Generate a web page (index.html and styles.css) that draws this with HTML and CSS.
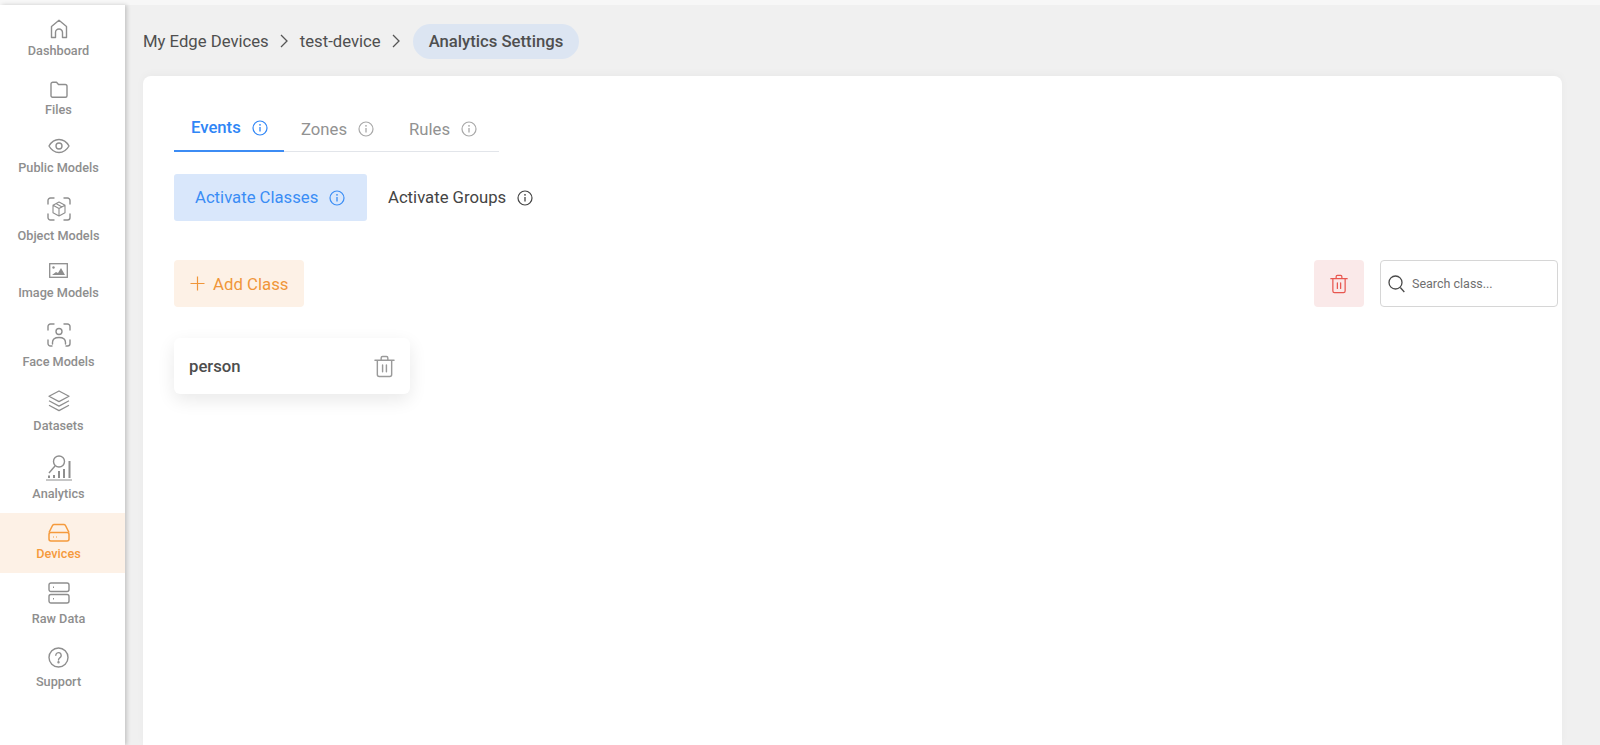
FILE: index.html
```html
<!DOCTYPE html>
<html lang="en">
<head>
  <meta charset="UTF-8" />
  <title>Analytics Settings</title>
  <link rel="stylesheet" href="styles.css">
</head>
<body>
  <svg class="defs" width="0" height="0">
    <symbol id="info" viewBox="0 0 16 16">
      <circle cx="8" cy="8" r="7" fill="none" stroke="currentColor" stroke-width="1.2"/>
      <path d="M8 7v4.4" fill="none" stroke="currentColor" stroke-width="1.3"/>
      <circle cx="8" cy="4.8" r="0.9" fill="currentColor"/>
    </symbol>
    <symbol id="trash" viewBox="0 0 22 24">
      <path d="M1 5.5h20M7.5 5V3a1.5 1.5 0 0 1 1.5-1.5h4A1.5 1.5 0 0 1 14.500 3v2M3.500 5.500V20.500a2 2 0 0 0 2 2h11a2 2 0 0 0 2-2V5.500M9 10.500v7M13 10.500v7" fill="none" stroke="currentColor" stroke-width="1.500" stroke-linecap="round" stroke-linejoin="round"/>
    </symbol>
  </svg>

  <div class="app">
    <nav class="sidebar">
      <a class="nav-item item-dashboard">
        <svg width="18" height="20" viewBox="0 0 18 20" fill="none" stroke="currentColor" stroke-width="1.400" stroke-linejoin="round"><path d="M1.500 18.500V7.500L9 1.200l7.500 6.300v11h-4v-5a3.500 3.500 0 0 0-7 0v5z"/></svg>
        <span>Dashboard</span>
      </a>
      <a class="nav-item item-files">
        <svg width="18" height="17" viewBox="0 0 18 17" fill="none" stroke="currentColor" stroke-width="1.400" stroke-linejoin="round"><path d="M1 3a1.800 1.800 0 0 1 1.800-1.800h3.700l2 2.300h6.700A1.800 1.800 0 0 1 17 5.300v9.500a1.500 1.500 0 0 1-1.500 1.500h-13A1.500 1.500 0 0 1 1 14.800z"/></svg>
        <span>Files</span>
      </a>
      <a class="nav-item item-public">
        <svg width="22" height="16" viewBox="0 0 22 16" fill="none" stroke="currentColor" stroke-width="1.400"><path d="M1 8c2.500-4.400 6-6.500 10-6.500S18.500 3.600 21 8c-2.500 4.400-6 6.500-10 6.500S3.500 12.400 1 8z" stroke-linejoin="round"/><circle cx="11" cy="8" r="3"/></svg>
        <span>Public Models</span>
      </a>
      <a class="nav-item item-object">
        <svg width="24" height="24" viewBox="0 0 24 24" fill="none" stroke="currentColor" stroke-width="1.400" stroke-linecap="round" stroke-linejoin="round"><path d="M1 7V3.500A2.500 2.500 0 0 1 3.500 1H7M17 1h3.500A2.500 2.500 0 0 1 23 3.500V7M23 17v3.500a2.500 2.500 0 0 1-2.500 2.500H17M7 23H3.500A2.500 2.500 0 0 1 1 20.500V17"/><path stroke-width="1.100" d="M12 5l6 3.200v7.600L12 19l-6-3.200V8.200zM6 8.200l6 3.300 6-3.300M12 11.500V19M9 6.600l6 3.300"/></svg>
        <span>Object Models</span>
      </a>
      <a class="nav-item item-image">
        <svg width="19" height="15" viewBox="0 0 19 15" fill="none"><rect x="0.700" y="0.700" width="17.600" height="13.600" stroke="currentColor" stroke-width="1.300"/><circle cx="4.500" cy="4.500" r="1.200" fill="currentColor"/><path d="M3 12l4-3 2 1 3-5 4 7z" fill="currentColor"/></svg>
        <span>Image Models</span>
      </a>
      <a class="nav-item item-face">
        <svg width="24" height="24" viewBox="0 0 24 24" fill="none" stroke="currentColor" stroke-width="1.400" stroke-linecap="round" stroke-linejoin="round"><path d="M1 7V3.500A2.500 2.500 0 0 1 3.500 1H7M17 1h3.500A2.500 2.500 0 0 1 23 3.500V7M23 17v3.500a2.500 2.500 0 0 1-2.500 2.500H19M5 23H3.500A2.500 2.500 0 0 1 1 20.500V17"/><circle cx="12" cy="8.500" r="3"/><path d="M5.500 21v-1.500c0-3 2.500-5 6.500-5s6.500 2 6.500 5V21"/></svg>
        <span>Face Models</span>
      </a>
      <a class="nav-item item-datasets">
        <svg width="22" height="22" viewBox="0 0 22 22" fill="none" stroke="currentColor" stroke-width="1.300" stroke-linejoin="round"><path d="M11 1l10 5.300-10 5.300L1 6.300z"/><path d="M1 10.800l10 5.300 10-5.300M1 15.300l10 5.300 10-5.300"/></svg>
        <span>Datasets</span>
      </a>
      <a class="nav-item item-analytics">
        <svg width="28" height="26" viewBox="0 0 28 26" fill="none" stroke="currentColor"><circle cx="14" cy="6.500" r="5.500" stroke-width="1.400"/><path d="M10 11l-6 7" stroke-width="1.400"/><path d="M1 25h26" stroke-width="1"/><path d="M4 20.500v2.500M9 20v3M14 16v7M19 14v9M24.500 6v17" stroke-width="2"/></svg>
        <span>Analytics</span>
      </a>
      <a class="nav-item item-devices active">
        <svg width="22" height="19" viewBox="0 0 22 19" fill="none" stroke="currentColor" stroke-width="1.500" stroke-linejoin="round"><path d="M1 9.500L4.500 2.500A2 2 0 0 1 6.300 1.500h9.400a2 2 0 0 1 1.800 1L21 9.500"/><rect x="1" y="9.500" width="20" height="8.500" rx="2"/><path d="M5 14h1M8 14h1" stroke-width="1"/></svg>
        <span>Devices</span>
      </a>
      <a class="nav-item item-raw">
        <svg width="22" height="22" viewBox="0 0 22 22" fill="none" stroke="currentColor" stroke-width="1.400"><rect x="1" y="1" width="20" height="8.500" rx="2"/><rect x="1" y="12.500" width="20" height="8.500" rx="2"/><path d="M5 5.200h1M5 16.700h1"/></svg>
        <span>Raw Data</span>
      </a>
      <a class="nav-item item-support">
        <svg width="21" height="21" viewBox="0 0 21 21" fill="none" stroke="currentColor" stroke-width="1.400"><circle cx="10.500" cy="10.500" r="9.500"/><path d="M7.800 8.300a2.700 2.700 0 1 1 4.200 2.300c-1 .7-1.500 1.200-1.500 2.400" stroke-linecap="round"/><circle cx="10.500" cy="15.300" r="0.500" fill="currentColor"/></svg>
        <span>Support</span>
      </a>
    </nav>

    <main class="main">
      <div class="breadcrumb">
        <span>My Edge Devices</span>
        <svg class="chevron" width="10" height="14" viewBox="0 0 10 14" fill="none" stroke="currentColor" stroke-width="1.300"><path d="M2 1l6 6-6 6"/></svg>
        <span>test-device</span>
        <svg class="chevron" width="10" height="14" viewBox="0 0 10 14" fill="none" stroke="currentColor" stroke-width="1.300"><path d="M2 1l6 6-6 6"/></svg>
        <span class="crumb-pill">Analytics Settings</span>
      </div>

      <section class="card">
        <div class="tabs">
          <div class="tab tab-events active">Events <svg class="info"><use href="#info"/></svg></div>
          <div class="tab tab-zones">Zones <svg class="info"><use href="#info"/></svg></div>
          <div class="tab tab-rules">Rules <svg class="info"><use href="#info"/></svg></div>
        </div>

        <div class="subtabs">
          <div class="subtab active">Activate Classes <svg class="info"><use href="#info"/></svg></div>
          <div class="subtab">Activate Groups <svg class="info"><use href="#info"/></svg></div>
        </div>

        <div class="toolbar">
          <button class="add-btn">
            <svg width="15" height="15" viewBox="0 0 15 15" fill="none" stroke="currentColor" stroke-width="1.200"><path d="M7.500 0.500v14M0.500 7.500h14"/></svg>
            Add Class
          </button>
          <div class="toolbar-right">
            <button class="delete-btn"><svg class="trash-sm"><use href="#trash"/></svg></button>
            <label class="search">
              <svg width="17" height="18" viewBox="0 0 17 18" fill="none" stroke="currentColor" stroke-width="1.300"><circle cx="7.500" cy="7.500" r="6.500"/><path d="M12.300 12.500l4 4.500"/></svg>
              <input type="text" placeholder="Search class...">
            </label>
          </div>
        </div>

        <div class="class-card">
          <span>person</span>
          <svg class="trash-md"><use href="#trash"/></svg>
        </div>
      </section>
    </main>
  </div>
</body>
</html>
```

FILE: styles.css
```css
* {
  margin: 0; padding: 0; box-sizing: border-box;
}
html, body {
  width: 100%; height: 100%;
  overflow: hidden;
  background: #fff;
  font-family: Roboto, 'Liberation Sans', sans-serif;
  color: #4a4a4a;
}
.defs {
  position: absolute;
}
.app {
  display: flex;
  height: 100%;
  padding-top: 5px;
  background: #f7f7f7;
}

/* sidebar */
.sidebar {
  width: 125px;
  flex-shrink: 0;
  display: flex;
  flex-direction: column;
  padding-top: 2px;
  background: #fff;
  box-shadow: 2px 0 4px rgba(0,0,0,0.18);
  position: relative;
  z-index: 2;
}
.nav-item {
  display: flex;
  flex-direction: column;
  align-items: center;
  justify-content: flex-end;
  flex-shrink: 0;
  padding: 0 8px 11px 0;
  color: #8e8e8e;
  font-size: 12.700px;
  font-weight: 500;
  line-height: 16px;
}
.nav-item.active {
  background: #fdf1e6;
  color: #f59a3c;
}
.item-dashboard { height: 63px; gap: 4px; }
.item-files     { height: 59px; gap: 4px; }
.item-public    { height: 58px; gap: 6px; }
.item-object    { height: 68px; gap: 7px; }
.item-image     { height: 57px; gap: 7px; }
.item-face      { height: 69px; gap: 7px; }
.item-datasets  { height: 64px; gap: 6px; }
.item-analytics { height: 68px; gap: 5px; }
.item-devices   { height: 60px; gap: 4px; }
.item-raw       { height: 65px; gap: 7px; }
.item-support   { height: 63px; gap: 6px; }

/* main area */
.main {
  flex: 1;
  min-width: 0;
  display: flex;
  flex-direction: column;
  padding: 0 38px 0 18px;
  background: #f0f0f0;
}
.breadcrumb {
  display: flex;
  align-items: center;
  height: 71px;
  padding-top: 1px;
  font-size: 16.700px;
  color: #4f4f4f;
}
.chevron {
  margin: 0 11px 0 10px;
  color: #555;
}
.crumb-pill {
  margin-left: 1px;
  padding: 0 16px;
  height: 35px;
  line-height: 35px;
  border-radius: 18px;
  background: #dce5f2;
  font-weight: 500;
}
.card {
  flex: 1;
  background: #fff;
  border-radius: 8px 8px 0 0;
  padding: 29px 4px 0 31px;
  box-shadow: 0 -2px 8px rgba(0,0,0,0.03);
}

/* tabs */
.info {
  width: 16px;
  height: 16px;
  flex-shrink: 0;
}
.tabs {
  display: flex;
  width: 325px;
  height: 47px;
  border-bottom: 1px solid #e2e5ea;
  font-size: 16.700px;
  color: #929292;
}
.tab {
  display: flex;
  align-items: center;
  gap: 11px;
  height: 47px;
  padding-top: 1px;
}
.tab .info { color: #a8a8a8; }
.tab-events {
  width: 110px;
  padding: 0 0 0 17px;
  font-weight: 500;
}
.tab-zones {
  width: 125px;
  padding-left: 17px;
}
.tab.active {
  color: #2f86f6;
  border-bottom: 2px solid #3c8cf4;
}
.tab.active .info { color: #2f86f6; }

.subtabs {
  display: flex;
  align-items: center;
  gap: 21px;
  margin-top: 22px;
  font-size: 16.700px;
}
.subtab {
  display: flex;
  align-items: center;
  gap: 11px;
  height: 47px;
  color: #444;
}
.subtab.active {
  padding: 0 21px 0 21px;
  min-width: 193px;
  background: #d9e7fb;
  border-radius: 3px;
  color: #3a8df5;
}

/* toolbar */
.toolbar {
  display: flex;
  justify-content: space-between;
  margin-top: 39px;
}
.toolbar-right {
  display: flex;
  gap: 16px;
}
button {
  border: 0;
  font-family: inherit;
}
.add-btn {
  display: flex;
  align-items: center;
  gap: 8px;
  width: 130px;
  height: 47px;
  padding-left: 16px;
  background: #fdf1e6;
  border-radius: 4px;
  color: #f0963a;
  font-size: 16.800px;
}
.delete-btn {
  display: flex;
  align-items: center;
  justify-content: center;
  width: 50px;
  height: 47px;
  background: #fae9e9;
  border-radius: 4px;
  color: #e8564f;
}
.trash-sm {
  width: 18px;
  height: 20px;
}
.search {
  display: flex;
  align-items: center;
  gap: 7px;
  width: 178px;
  height: 47px;
  padding-left: 7px;
  border: 1.500px solid #d6d6d6;
  border-radius: 4px;
  color: #4a4a4a;
}
.search input {
  flex: 1;
  min-width: 0;
  border: 0;
  outline: 0;
  font-family: inherit;
  font-size: 12.500px;
}
.search input::placeholder {
  color: #6f6f6f;
  opacity: 1;
}

.class-card {
  display: flex;
  align-items: center;
  justify-content: space-between;
  width: 236px;
  height: 56px;
  margin-top: 31px;
  padding: 0 15px;
  background: #fff;
  border-radius: 6px;
  box-shadow: 0 6px 18px rgba(0,0,0,0.09);
  font-size: 16.700px;
  font-weight: 500;
  color: #4d4d4d;
}
.trash-md {
  width: 21px;
  height: 23px;
  color: #9a9a9a;
}
```
